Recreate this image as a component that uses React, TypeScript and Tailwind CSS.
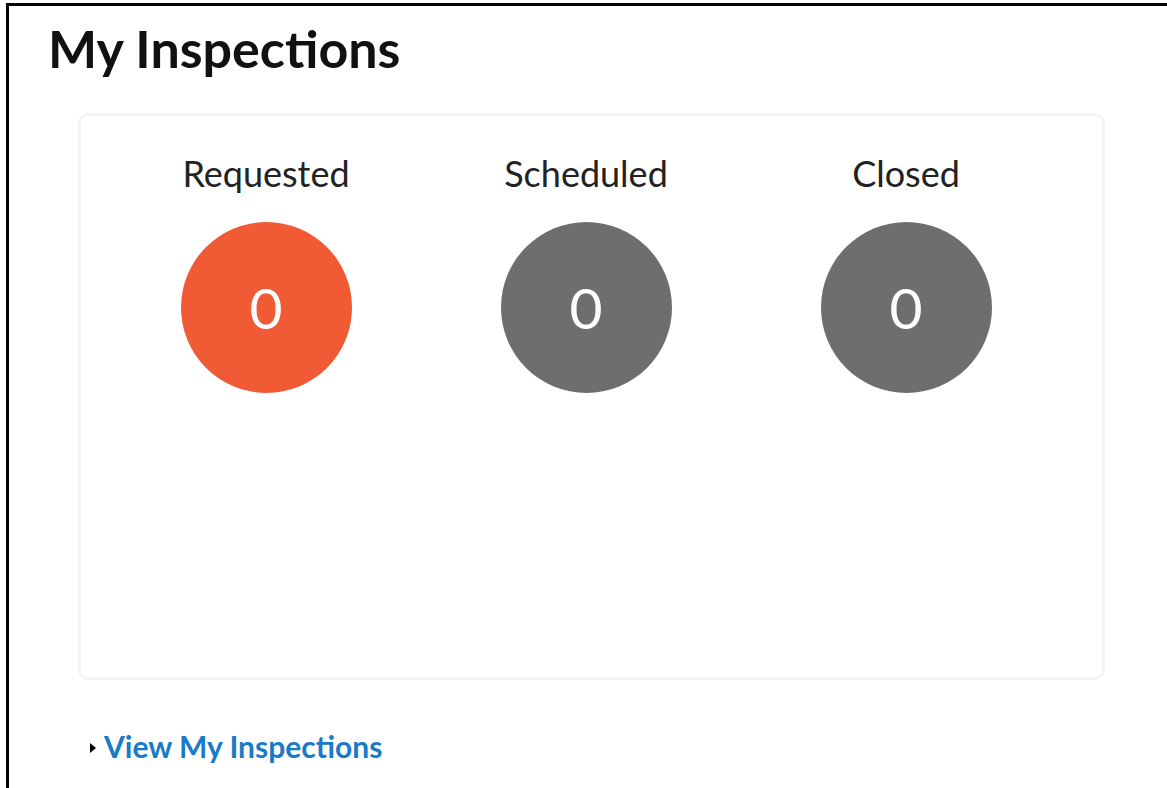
import React from 'react';

type Stat = { label: string; count: number; active?: boolean };

const STATS: Stat[] = [
  { label: 'Requested', count: 0, active: true },
  { label: 'Scheduled', count: 0 },
  { label: 'Closed', count: 0 },
];

const StatCircle: React.FC<{ stat: Stat }> = ({ stat }) => (
  <div className="flex flex-col items-center">
    <div className="text-[36px] leading-[38px] text-[#222]">{stat.label}</div>
    <div
      className={`mt-[30px] w-[171px] h-[171px] rounded-full flex items-center justify-center text-white text-[57px] leading-none ${
        stat.active ? 'bg-[#f05a35]' : 'bg-[#6e6e6e]'
      }`}
    >
      {stat.count}
    </div>
  </div>
);

export default function App() {
  return (
    <div className="min-h-screen bg-white font-['Lato','Open_Sans',sans-serif] pl-[6px] pt-[3px]">
      <div className="border-l-[3px] border-t-[3px] border-black min-h-[785px] pl-[39px]">
        <h1 className="text-[52px] leading-[60px] font-bold text-[#111] pt-[12px]">
          My Inspections
        </h1>

        {/* summary card */}
        <div className="mt-[35px] ml-[30px] w-[1027px] h-[567px] border-[3px] border-[#f4f4f4] rounded-[10px] pl-[25px] pt-[38px]">
          <div className="grid grid-cols-[320px_320px_320px]">
            {STATS.map((s) => (
              <StatCircle key={s.label} stat={s} />
            ))}
          </div>
        </div>

        <a href="#" className="mt-[44px] ml-[42px] flex items-center gap-[7px] text-[#1a7ac8] font-bold text-[30px] no-underline">
          <svg width="7" height="10" viewBox="0 0 7 10" className="mt-[2px]">
            <path d="M0 0 L6 5 L0 10 Z" fill="#000" />
          </svg>
          View My Inspections
        </a>
      </div>
    </div>
  );
}
